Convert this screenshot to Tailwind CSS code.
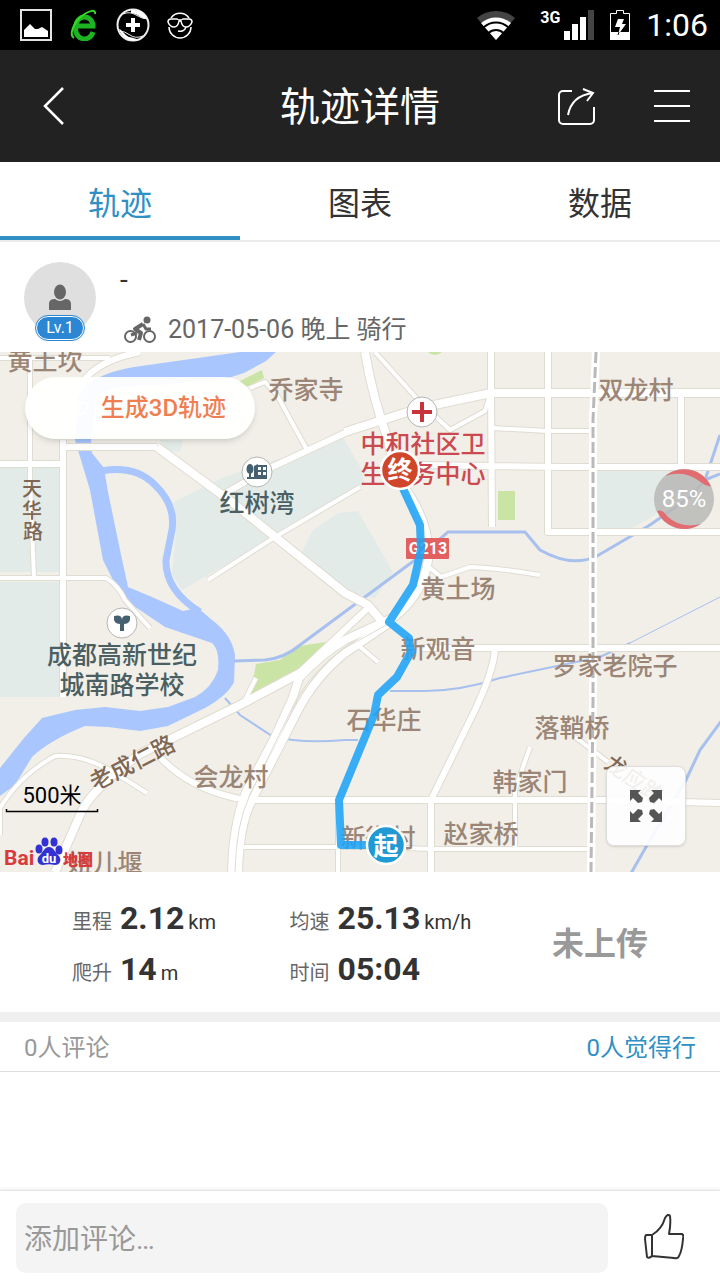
<!DOCTYPE html>
<html lang="zh-CN">
<head>
  <meta charset="UTF-8" />
  <meta name="viewport" content="width=device-width, initial-scale=1.0" />
  <title>轨迹详情</title>
  <script src="https://cdn.jsdelivr.net/npm/@tailwindcss/browser@4"></script>
</head>
<body class="min-h-screen flex flex-col bg-white text-[#333] font-['Roboto','Noto_Sans_CJK_SC',sans-serif]">

  <!-- Status bar -->
  <div class="flex items-center h-[50px] bg-black text-white pl-5 pr-3">
    <div class="flex items-center gap-4">
      <svg class="w-8 h-8" viewBox="0 0 32 32"><rect x="1" y="1" width="30" height="30" fill="none" stroke="#e4e4e4" stroke-width="2"/><path fill="#fff" d="M4 28V21l6-6 5 5h3l4-2 6 4v6z"/></svg>
      <svg class="w-8 h-8" viewBox="0 0 32 32">
        <path d="M7 17H27.500M25 17A8.500 9 0 0 0 8 17M8 17A8.500 9.500 0 0 0 25 23" fill="none" stroke="#1db321" stroke-width="5"/>
        <path d="M6 29C1 26 5 14 14 7S28 1 27 5" fill="none" stroke="#39d92b" stroke-width="2"/>
      </svg>
      <svg class="w-[34px] h-[34px]" viewBox="0 0 34 34">
        <circle cx="17" cy="17" r="15.500" fill="none" stroke="#eee" stroke-width="2"/>
        <path d="M7 6Q14 3 20 7T32 11M2 23Q9 23 14 27T27 28" fill="none" stroke="#eee"/>
        <path fill="#fff" d="M15 2c8 0 14 2 16 9-6 0-8-5-16-6zM3 21c4 1 5 6 10 8 4 1 6 1 9 3-8 2-16-2-19-11zM15 10h4v5h5v4h-5v5h-4v-5h-5v-4h5z"/>
      </svg>
      <svg class="w-7 h-7" viewBox="0 0 28 28" fill="none" stroke="#fff" stroke-width="1.500">
        <path d="M5 7a11 11 0 0 1 18 0M3 16a11 11 0 0 0 22 0M12 20c4 1 7-1 8-4"/>
        <path d="M5 8h6q3 2 6 0h6q3 0 3 3-2 5-6 5-4 0-5-6h-2q-1 6-5 6-4 0-6-5 0-3 3-3z"/>
      </svg>
    </div>
    <div class="ml-auto flex items-center gap-4">
      <svg class="w-10 h-8 mr-2" viewBox="0 0 40 32">
        <path d="M20 31L1 9a29 29 0 0 1 38 0z" fill="#444"/>
        <path d="M20 31L5 14a23 23 0 0 1 30 0z" fill="#fff"/>
        <path d="M8 18a18 18 0 0 1 24 0M12.500 24a11 11 0 0 1 15 0" fill="none" stroke="#000" stroke-width="2"/>
      </svg>
      <div class="flex items-start gap-1">
        <span class="text-base leading-4 font-bold">3G</span>
        <svg class="w-[30px] h-[30px]" viewBox="0 0 30 30" fill="#fff"><path d="M0 21h6v9H0zM8 14h6v16H8zM16 7h6v23h-6z"/><path fill="#444" d="M24 0h6v30h-6z"/></svg>
      </div>
      <svg class="w-5 h-[30px]" viewBox="0 0 20 30"><path d="M.5 3.500h6v-3h7v3h6v26H.5z" fill="none" stroke="#fff"/><path fill="#fff" d="M0 22h20v8H0zM8 9h6l-2 5h4L8 25l2-8H5z"/><path d="M9 22l-1 3" stroke="#000"/></svg>
      <span class="text-[32px] leading-10">1:06</span>
    </div>
  </div>

  <!-- Header -->
  <header class="grid grid-cols-[1fr_auto_1fr] items-center h-28 bg-[#222] text-white px-[30px]">
    <a href="#" aria-label="返回" class="pl-3">
      <svg class="w-6 h-10" viewBox="0 0 24 40" fill="none" stroke="#fff" stroke-width="2.500"><path d="M21 2L3 20l18 18"/></svg>
    </a>
    <h1 class="text-[40px] leading-[48px] pt-1">轨迹详情</h1>
    <div class="flex justify-end items-center gap-[58px]">
      <button aria-label="分享">
        <svg class="w-10 h-10" viewBox="0 0 40 40" fill="none" stroke="#fff" stroke-width="2"><path d="M16 5H7a4 4 0 0 0-4 4v25a4 4 0 0 0 4 4h27a4 4 0 0 0 4-4V21M12 29C14 18 21 9 37 7M27 3l10 4-6 8"/></svg>
      </button>
      <button aria-label="菜单">
        <svg class="w-9 h-9" viewBox="0 0 36 36" stroke="#fff" stroke-width="2"><path d="M0 3h36M0 18h36M0 33h36"/></svg>
      </button>
    </div>
  </header>

  <!-- Tabs -->
  <nav class="grid grid-cols-3 h-20 text-center text-[32px] leading-[84px] border-b-2 border-[#ebebeb]">
    <a href="#" class="h-[78px] border-b-4 border-[#3090c4] text-[#3090c4]">轨迹</a>
    <a href="#" class="h-[78px]">图表</a>
    <a href="#" class="h-[78px]">数据</a>
  </nav>

  <!-- User -->
  <section class="flex gap-6 h-[110px] px-6 pt-5">
    <div class="relative w-[72px] h-[72px] rounded-full bg-[#dfdfdf] flex items-center justify-center">
      <svg class="w-6 h-7" viewBox="0 0 24 28" fill="#666"><ellipse cx="12" cy="8" rx="6" ry="7.500"/><path d="M1 26v-6c0-4 3-5 6-5q5 4 10 0c3 0 6 1 6 5v6z"/></svg>
      <span class="absolute left-3 top-[54px] w-12 h-6 rounded-full border border-white bg-[#2b87d3] text-white text-base leading-[22px] text-center outline outline-[#2b87d3]">Lv.1</span>
    </div>
    <div class="flex flex-col">
      <div class="text-[28px] leading-9">-</div>
      <div class="mt-3 pl-1 flex items-center gap-3 text-[25px] leading-10 text-[#666]">
        <svg class="w-8 h-7" viewBox="0 0 32 28" fill="none" stroke="#666" stroke-width="2">
          <circle cx="6.500" cy="20.500" r="5.500"/><circle cx="25.500" cy="20.500" r="5.500"/><circle cx="23" cy="4" r="3.500" fill="#666" stroke="none"/>
          <path d="M19 8l-8 5 6 4-2 7" stroke-width="4" stroke-linejoin="round"/><path d="M19 8l3 5h5M7 19l6-2" stroke-width="3"/>
        </svg>
        <span>2017-05-06 晚上 骑行</span>
      </div>
    </div>
  </section>

  <!-- Map -->
  <section class="relative h-[520px] overflow-hidden bg-[#f1efe8]">
    <svg class="w-full h-full" viewBox="0 352 720 520" preserveAspectRatio="xMidYMid slice">
      <defs>
        <g id="minor">
          <path d="M0 358H110M30 358V480L34 577M0 578H106Q118 585 125 600L150 628M250 388L265 382L277 395L307 450M375 352L420 402L450 430L485 411L490 395M492 428L548 431H593M430 568L441 577L470 567Q500 568 540 575M360 487L275 537L208 580M0 808Q20 775 55 756Q80 754 110 770L147 793M245 700L256 678M235 847H380L430 849H590M530 747L515 790V848M575 737L608 762M358 645L378 662M338 800V872M0 835V808"/>
        </g>
        <g id="mid">
          <path d="M0 464H63M63 440V697M491 352V393L492 527M548 352V532H720M420 465L560 467H720M681 392V467M420 648H720M495 648Q494 670 475 710L431 800V872M160 757Q190 790 245 800H606L720 803M157 447H63V464M140 352Q100 360 84 380M222 495L270 468L360 426M298 674L370 606"/>
        </g>
        <g id="main">
          <path d="M157 447L233 503L345 593 368 605 385 625M365 352Q372 395 388 440L395 475Q432 520 428 560 424 590 400 612L385 625M345 432L420 408L491 393H720M300 673L240 705 140 754Q90 790 80 815L55 872"/>
        </g>
        <g id="highway">
          <path d="M392 618L345 640Q320 655 299 678L292 700 275 737 246 792Q233 825 232 872M392 621L345 653Q315 677 297 712L252 800Q239 825 238 872"/>
        </g>
      </defs>

      <!-- Areas -->
      <g fill="#e3ebe9">
        <path d="M0 467H62V572H0zM0 582H62V697H0zM160 440H183L180 451 168 452zM174 502L222 478 343 437 362 470 364 484 182 590 172 575 176 530zM300 555L313 530 338 513 358 511 393 572 375 598 345 592zM596 469H665L708 480 650 518 630 529H596z"/>
      </g>
      <path fill="#c9e4a5" d="M249 700L256 664 280 660 300 646 326 642 308 664 300 673zM498 491H515V520H498zM236 383L262 370 264 378 244 388zM428 352H442Q435 358 428 352z"/>

      <!-- Water -->
      <path fill="#a9c6ff" d="M134 367L205 357 240 352H276L266 361 244 373 225 379 160 385Q100 385 96 400L91 440 92 453 104 468 108 492 120 550 128 587 152 597 183 611 198 608 212 620Q232 635 235 655L234 682Q228 695 205 708L168 726 140 731 108 727 85 726Q50 740 32 757L15 785 0 796V768L24 738 42 718 75 710 105 707 140 711 168 707 195 697Q212 688 218 670 220 650 212 643L165 627 122 598 103 560 90 490 75 440 78 400Q85 375 134 367z"/>
      <path d="M102 471Q135 465 155 485 176 505 172 530L166 560Q165 590 200 612" fill="none" stroke="#a9c6ff" stroke-width="7"/>
      <g fill="none" stroke="#a8c0ee" stroke-width="3">
        <path d="M234 661L265 660Q285 658 300 645L350 608 415 560 448 532H525L540 550Q572 568 597 556L650 525 690 497 705 480 720 435M705 480L720 474M722 720L700 750 685 782 650 840 630 875"/>
        <path stroke-width="2" d="M225 698L240 715 272 736Q300 744 345 740H358M390 691H425Q460 691 500 678L600 657 630 643"/>
        <path stroke-width="1" d="M630 643L720 597"/>
      </g>

      <!-- Roads: casing first, then fill -->
      <g fill="none" stroke="#dfdcd2" stroke-linejoin="round">
        <use href="#minor" stroke-width="6"/><use href="#mid" stroke-width="8"/><use href="#main" stroke-width="10"/><use href="#highway" stroke-width="10"/>
      </g>
      <g fill="none" stroke="#fff" stroke-linejoin="round">
        <use href="#minor" stroke-width="4"/><use href="#mid" stroke-width="6"/><use href="#main" stroke-width="8"/><use href="#highway" stroke-width="8"/>
      </g>
      <path d="M388 624L345 648Q315 668 296 700L249 797Q236 825 235 872" fill="none" stroke="#dfdcd2"/>
      <path d="M596 352L593 420V700L591 872" fill="none" stroke="#fff" stroke-width="8"/>
      <path d="M596 352L593 420V700L591 872" fill="none" stroke="#b9b9b9" stroke-width="3" stroke-dasharray="11 4"/>

      <!-- Place names -->
      <g font-size="25" font-weight="500" fill="#9b8576" text-anchor="middle">
        <text x="45" y="370">黄土坎</text>
        <text x="306" y="399">乔家寺</text>
        <text x="636" y="399">双龙村</text>
        <text x="458" y="598">黄土场</text>
        <text x="438" y="658">新观音</text>
        <text x="615" y="675">罗家老院子</text>
        <text x="384" y="729">石华庄</text>
        <text x="572" y="737">落鞘桥</text>
        <text x="530" y="791">韩家门</text>
        <text x="231" y="786">会龙村</text>
        <text x="481" y="843">赵家桥</text>
        <text x="378" y="847">新街村</text>
        <text x="105" y="872">妞儿堰</text>
      </g>
      <g font-size="20" font-weight="500" fill="#7f6754" text-anchor="middle">
        <text x="32" y="496">天</text><text x="32" y="518">华</text><text x="33" y="539">路</text>
        <text font-size="23" transform="translate(136 770) rotate(-27)">老成仁路</text>
        <text font-size="22" transform="translate(630 786) rotate(35)">龙应路</text>
      </g>
      <g font-size="25" font-weight="500" fill="#4b5f62" text-anchor="middle">
        <text x="257" y="512">红树湾</text>
        <text x="122" y="664">成都高新世纪</text>
        <text x="122" y="694">城南路学校</text>
      </g>
      <g font-size="25" fill="#cb4a50" font-weight="500" text-anchor="middle">
        <text x="423" y="453">中和社区卫</text>
        <text x="423" y="483">生服务中心</text>
      </g>
      <rect x="406" y="538" width="43" height="21" rx="1" fill="#e2605f"/>
      <text x="428" y="554" font-size="16" font-weight="700" fill="#fff" text-anchor="middle">G213</text>

      <!-- POI badges -->
      <g fill="#fff" stroke="#b5b5b5">
        <circle cx="257" cy="472" r="15"/><circle cx="122" cy="623" r="15"/><circle cx="422" cy="412" r="15"/>
      </g>
      <path d="M422 402V422M412 412H432" stroke="#c8343b" stroke-width="4"/>
      <g fill="#456170">
        <ellipse cx="250" cy="469" rx="3.500" ry="5"/><path d="M249 470h2v7h-2zM254 466l4-2v1h9v14H247v-2h7z"/>
        <path d="M114 616q8-2 8 4 0-6 8-4 1 8-6 8v7h-4v-7q-7 0-6-8z"/>
      </g>
      <path d="M258 467h3v3h-3zM263 467h3v3h-3zM258 472h3v3h-3zM263 472h3v3h-3z" fill="#fff"/>

      <!-- Track -->
      <path d="M400 482L420 525 421 550 413 585 389 622 409 638 411 652 397 677 378 695 374 715 339 800 341 845H386" fill="none" stroke="#1ea4f7" stroke-opacity=".88" stroke-width="8" stroke-linejoin="round"/>
      <g stroke="#fff" stroke-width="2.500">
        <circle cx="400" cy="470" r="19" fill="#d0462b"/><circle cx="386" cy="845" r="19" fill="#2199d3"/>
      </g>
      <g font-size="25" font-weight="700" fill="#fff" text-anchor="middle">
        <text x="400" y="479">终</text><text x="386" y="855">起</text>
      </g>

      <!-- Scale and provider logo -->
      <text x="52" y="803" font-size="22" fill="#000" text-anchor="middle">500米</text>
      <path d="M6.500 809V811.500H97.500V809" fill="none" stroke="#000" stroke-width="1.500"/>
      <text x="4" y="865" font-size="21" font-weight="700" fill="#d93a3c">Bai</text>
      <g fill="#3331d4">
        <ellipse cx="39" cy="849" rx="3.500" ry="4.500"/><ellipse cx="45" cy="842" rx="3.500" ry="4.500"/><ellipse cx="54" cy="842" rx="3.500" ry="4.500"/><ellipse cx="59" cy="850" rx="3.500" ry="4.500"/>
        <path d="M49 847c5 0 6 6 10 9 3 4 1 9-4 9-4-1-8-1-12 0-5 0-7-5-4-9 4-3 5-9 10-9z"/>
      </g>
      <text x="49" y="863" font-size="13" font-weight="700" fill="#fff" text-anchor="middle">du</text>
      <text x="63" y="865" font-size="15" font-weight="900" fill="#d93a3c">地图</text>
    </svg>

    <button class="absolute left-[25px] top-[25px] h-[62px] pl-10 pr-[29px] flex items-center gap-3 rounded-full bg-white/95 shadow-md text-2xl font-medium text-[#ef7f52]">
      <span class="text-white text-xl italic font-bold" aria-hidden="true">3D</span>生成3D轨迹
    </button>
    <svg class="absolute right-1 top-[115px] w-16 h-16" viewBox="0 0 64 64">
      <circle cx="32" cy="32" r="30" fill="#b8b8b6" fill-opacity=".85"/>
      <path d="M13 9A30 30 0 0 1 59 19Q55 20 50 16 33 2 13 9zM5 44Q10 42 15 49 28 62 49 57A30 30 0 0 1 5 44z" fill="#e26c70"/>
      <text x="32" y="40" font-size="24" fill="#fff" text-anchor="middle">85%</text>
    </svg>
    <button aria-label="全屏" class="absolute right-[34px] bottom-[26px] w-20 h-20 flex items-center justify-center rounded-lg bg-white/90 border border-[#ddd] shadow-sm">
      <svg class="w-8 h-8" viewBox="0 0 32 32">
        <defs><path id="arrow" d="M0 0h11l-3 3 5 5-1 4-4 1-5-5-3 3z" fill="#555"/></defs>
        <use href="#arrow"/><use href="#arrow" transform="translate(32 0) scale(-1 1)"/><use href="#arrow" transform="translate(0 32) scale(1 -1)"/><use href="#arrow" transform="translate(32 32) scale(-1 -1)"/>
      </svg>
    </button>
  </section>

  <!-- Stats -->
  <section class="flex items-center h-[140px] pt-1">
    <dl class="w-2/3 pl-[72px] grid grid-cols-[8fr_7fr] auto-rows-[51px] text-xl whitespace-nowrap">
      <div class="flex items-baseline gap-2">
        <dt class="text-[#666]">里程</dt>
        <dd class="leading-[51px]"><b class="text-[32px] mr-1">2.12</b>km</dd>
      </div>
      <div class="flex items-baseline gap-2">
        <dt class="text-[#666]">均速</dt>
        <dd class="leading-[51px]"><b class="text-[32px] mr-1">25.13</b>km/h</dd>
      </div>
      <div class="flex items-baseline gap-2">
        <dt class="text-[#666]">爬升</dt>
        <dd class="leading-[51px]"><b class="text-[32px] mr-1">14</b>m</dd>
      </div>
      <div class="flex items-baseline gap-2">
        <dt class="text-[#666]">时间</dt>
        <dd class="leading-[51px]"><b class="text-[32px]">05:04</b></dd>
      </div>
    </dl>
    <div class="w-1/3 text-center text-[32px] font-bold text-[#999]">未上传</div>
  </section>

  <!-- Comments -->
  <section class="flex justify-between items-center h-[60px] px-6 pt-[2px] border-t-[10px] border-b border-t-[#f0f0f0] border-b-[#ddd] text-2xl">
    <span class="text-[#999]">0人评论</span>
    <a href="#" class="text-[#3090c4]">0人觉得行</a>
  </section>

  <footer class="mt-auto flex items-center h-[90px] pt-1 pl-4 pr-9 gap-9 border-t border-[#e6e6e6] shadow-[0_-1px_3px_#00000014]">
    <input type="text" aria-label="添加评论" placeholder="添加评论…" class="flex-1 min-w-0 h-[70px] rounded-[10px] bg-[#f4f4f4] px-2 pt-1 text-[28px] placeholder:text-[#999] outline-none" />
    <button aria-label="点赞">
      <svg class="w-10 h-12" viewBox="0 0 40 48" fill="none" stroke="#333" stroke-width="2" stroke-linejoin="round"><path d="M8 21Q18 15 21 4q3-5 5-2 1 8-1 18h13q2 1 1 5-1 12-4 17-1 3-5 2l-22-2zM8 21H2q-1 1-1 4l2 18q2 2 5-1z"/></svg>
    </button>
  </footer>
</body>
</html>
